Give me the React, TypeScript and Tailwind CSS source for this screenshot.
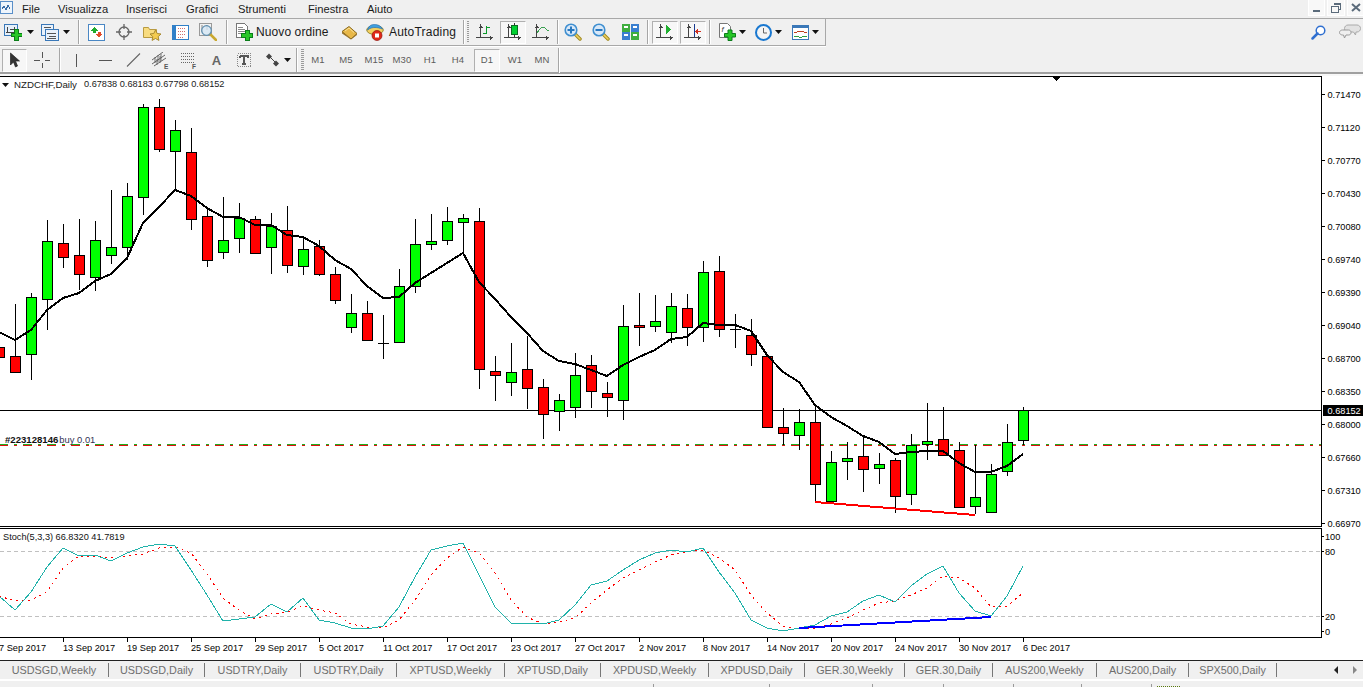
import React from "react";

type C = [number, number, number, number, "g" | "r"];
const candles: C[] = [
  [330, 347, 357, 362, "r"],
  [304, 356, 372, 373, "r"],
  [293, 297, 354, 380, "g"],
  [220, 241, 299, 330, "g"],
  [224, 243, 257, 268, "r"],
  [219, 255, 274, 290, "r"],
  [221, 240, 277, 291, "g"],
  [190, 247, 255, 264, "g"],
  [183, 196, 247, 260, "g"],
  [104, 107, 197, 215, "g"],
  [99, 107, 149, 152, "r"],
  [120, 130, 151, 191, "g"],
  [128, 152, 219, 230, "r"],
  [208, 216, 260, 267, "r"],
  [197, 240, 252, 259, "g"],
  [203, 218, 238, 253, "g"],
  [216, 219, 253, 253, "r"],
  [213, 226, 247, 274, "g"],
  [206, 230, 265, 273, "r"],
  [238, 249, 266, 275, "g"],
  [240, 246, 274, 276, "r"],
  [267, 274, 300, 304, "r"],
  [294, 313, 327, 333, "g"],
  [301, 313, 340, 340, "r"],
  [315, 343, 343, 359, "r"],
  [269, 286, 342, 343, "g"],
  [219, 244, 286, 293, "g"],
  [214, 241, 244, 250, "g"],
  [207, 221, 240, 245, "g"],
  [214, 218, 222, 253, "g"],
  [208, 221, 369, 389, "r"],
  [356, 371, 375, 401, "r"],
  [343, 372, 382, 396, "g"],
  [336, 369, 388, 409, "r"],
  [379, 387, 414, 439, "r"],
  [394, 400, 411, 431, "g"],
  [353, 375, 407, 418, "g"],
  [355, 365, 391, 408, "r"],
  [382, 393, 397, 417, "r"],
  [305, 326, 400, 420, "g"],
  [293, 325, 327, 346, "r"],
  [295, 321, 326, 332, "g"],
  [293, 306, 332, 343, "g"],
  [294, 308, 327, 346, "r"],
  [261, 272, 327, 342, "g"],
  [256, 271, 329, 337, "r"],
  [314, 329, 329, 348, "r"],
  [319, 335, 354, 366, "r"],
  [356, 356, 427, 427, "r"],
  [408, 427, 433, 445, "r"],
  [409, 422, 435, 450, "g"],
  [407, 422, 484, 502, "r"],
  [451, 462, 501, 502, "g"],
  [442, 458, 461, 480, "g"],
  [436, 456, 469, 492, "r"],
  [453, 464, 468, 484, "g"],
  [458, 460, 496, 513, "r"],
  [434, 445, 494, 505, "g"],
  [403, 441, 444, 460, "g"],
  [407, 439, 455, 455, "r"],
  [442, 450, 507, 508, "r"],
  [445, 497, 506, 514, "g"],
  [464, 474, 512, 512, "g"],
  [424, 442, 471, 476, "g"],
  [407, 410, 440, 445, "g"],
];

const ma = [332,340,330,310,298,293,281,274,258,223,207,190,196,208,217,217,225,225,235,237,246,260,269,286,298,297,283,273,263,253,282,299,317,333,351,361,364,370,376,365,357,350,339,337,323,325,325,331,355,372,382,405,417,426,436,442,454,452,451,451,463,472,472,466,454];
const maStart = -1;

const teal = [596,610,592,567,548,556,555,561,553,547,544,546,570,595,621,619,617,604,612,598,620,623,628,629,626,607,577,550,546,543,575,607,623,623,624,620,605,585,581,570,560,553,550,552,548,572,593,620,628,631,628,625,616,612,601,595,602,586,574,566,593,611,616,596,566];
const red = [596,601,600,592,568,556,556,558,556,554,548,547,553,574,598,610,619,614,612,606,610,613,624,627,628,620,600,575,558,547,553,573,600,617,624,622,618,603,590,578,570,562,555,552,550,558,570,595,613,626,629,628,624,618,610,603,601,595,588,576,578,588,607,606,593];

const px = (k: number) => maStart + 16 * k;
const toPts = (a: number[]) => a.map((y, i) => `${px(i)},${y}`).join(" ");

const prices: [string, number][] = [
  ["0.71470", 94],["0.71120", 127],["0.70770", 160],["0.70430", 193],["0.70080", 226],["0.69740", 259],["0.69390", 292],
  ["0.69040", 325],["0.68700", 358],["0.68350", 391],["0.68000", 424],["0.67660", 457],["0.67310", 490],["0.66970", 523],
];
const dates: [string, number][] = [
  ["7 Sep 2017", -1],["13 Sep 2017", 63],["19 Sep 2017", 127],["25 Sep 2017", 191],["29 Sep 2017", 255],["5 Oct 2017", 319],
  ["11 Oct 2017", 383],["17 Oct 2017", 447],["23 Oct 2017", 511],["27 Oct 2017", 575],["2 Nov 2017", 639],["8 Nov 2017", 703],
  ["14 Nov 2017", 767],["20 Nov 2017", 831],["24 Nov 2017", 895],["30 Nov 2017", 959],["6 Dec 2017", 1023],
];
const tabs: [string, string][] = [
  ["USDSGD,Weekly", "w-[109px]"],["USDSGD,Daily", "w-[96px]"],["USDTRY,Daily", "w-[96px]"],["USDTRY,Daily", "w-[96px]"],
  ["XPTUSD,Weekly", "w-[108px]"],["XPTUSD,Daily", "w-[96px]"],["XPDUSD,Weekly", "w-[108px]"],["XPDUSD,Daily", "w-[96px]"],
  ["GER.30,Weekly", "w-[100px]"],["GER.30,Daily", "w-[88px]"],["AUS200,Weekly", "w-[104px]"],["AUS200,Daily", "w-[92px]"],["SPX500,Daily", "w-[88px]"],
];

const Plus = ({ x = 7, y = 6 }: { x?: number; y?: number }) => (
  <path transform={`translate(${x} ${y})`} d="M3.5.5h4v3.5h3.5v3.500h-3.500v3.500h-4v-3.500H0V4h3.500z" fill="#27c627" stroke="#0b7d1a" />
);
const Down = () => (
  <svg width="7" height="4" viewBox="0 0 7 4"><path d="M0 0h7L3.500 4z" fill="#111" /></svg>
);
const Axes = ({ children }: { children?: React.ReactNode }) => (
  <svg width="20" height="20" viewBox="0 0 20 20" shapeRendering="crispEdges">
    <path d="M5.500 2v14M1 15.500h17M4.500 4h2M3.500 5h4M16 14.500v2M15 13.500v4" stroke="#444" fill="none" />
    {children}
  </svg>
);
const Glass = ({ plus }: { plus: boolean }) => (
  <svg width="18" height="18" viewBox="0 0 18 18">
    <path d="M10.500 10.500l5.500 5.500" stroke="#a08a20" strokeWidth="3.500" strokeLinecap="round" />
    <path d="M10.500 10.500l5.500 5.500" stroke="#f0d060" strokeWidth="1.500" strokeLinecap="round" />
    <circle cx="7" cy="7" r="5.800" fill="#d8e8f8" stroke="#3f8fd0" strokeWidth="1.600" />
    <path d={plus ? "M3.500 7h7M7 3.500v7" : "M3.500 7h7"} stroke="#2878c0" strokeWidth="2" />
  </svg>
);
const Sep = () => <div className="w-px h-[24px] bg-[#a6a6a6] border-r-0 shadow-[1px_0_0_#ffffff]" />;
const Slot = ({ c, children }: { c: string; children?: React.ReactNode }) => (
  <div className={`${c} shrink-0 h-full flex items-center justify-center`}>{children}</div>
);
const Active = ({ c, children }: { c: string; children: React.ReactNode }) => (
  <div className={`${c} shrink-0 h-[23px] flex items-center justify-center border border-[#b0b0b0] border-r-white border-b-white bg-[#f7f7f7]`}>{children}</div>
);
const Grip = () => (
  <div className="w-[3px] h-[22px] bg-[repeating-linear-gradient(to_bottom,#9a9a9a_0,#9a9a9a_1px,#f0f0f0_1px,#f0f0f0_2px)]" />
);
const Tf = ({ c, t }: { c: string; t: string }) => (
  <Slot c={c}><span className="text-[9.500px] text-[#5c5c5c] tracking-[0.200px]">{t}</span></Slot>
);

const menus: [string, string][] = [["File", "w-[36px]"],["Visualizza", "w-[68px]"],["Inserisci", "w-[60px]"],["Grafici", "w-[52px]"],["Strumenti", "w-[70px]"],["Finestra", "w-[59px]"],["Aiuto", "w-[40px]"]];

export default function App() {
  return (
    <div className="w-[1363px] h-[687px] overflow-hidden bg-[#f0f0f0] flex flex-col font-['Liberation_Sans',sans-serif] text-black">
      {/* menu */}
      <div className="h-[18px] shrink-0 flex items-center relative">
        <div className="w-[22px] h-full flex items-start">
          <svg width="14" height="15" viewBox="0 0 14 15" shapeRendering="crispEdges">
            <rect x="0.500" y="1.500" width="12" height="12" fill="#eef5fc" stroke="#5a8fc8" />
            <path d="M2 9l2-3 2 4 2-5 2 4" stroke="#3b6ea8" fill="none" />
          </svg>
        </div>
        {menus.map(([t, w]) => (
          <div key={t} className={`${w} text-[11.200px] leading-[16px] text-[#1a1a1a]`}>{t}</div>
        ))}
        <div className="ml-auto flex gap-[2px] h-[16px] self-start">
          <div className="w-[17px] h-full bg-[#f8f8f8] border-x border-b border-white flex items-end justify-center pb-[3px]"><div className="w-[7px] h-[2px] bg-[#5b6b7b]" /></div>
          <div className="w-[18px] h-full bg-[#f8f8f8] border-x border-b border-white flex items-center justify-center">
            <svg width="10" height="10" viewBox="0 0 10 10" shapeRendering="crispEdges"><path d="M3 2V.5h6.500V6H8M.5 3.500h6.500V9.500H.500z" fill="none" stroke="#5b6b7b" /><path d="M3 1h6.500M1 3.500h6" stroke="#5b6b7b" /></svg>
          </div>
          <div className="w-[16px] h-full bg-[#f8f8f8] border-l border-b border-white flex items-center justify-center">
            <svg width="10" height="9" viewBox="0 0 10 9"><path d="M1 1l8 7M9 1L1 8" stroke="#5b6b7b" strokeWidth="2" /></svg>
          </div>
        </div>
      </div>
      <div className="h-px shrink-0 bg-[#a8a8a8]" />
      {/* toolbar 1 */}
      <div className="h-[27px] shrink-0 flex items-stretch relative">
        <div className="w-[826px] h-[27px] flex items-center border-r border-b border-[#a8a8a8] pl-[2px] shadow-[0_1px_0_#ffffff]">
          <Slot c="w-[22px]">
            <svg width="18" height="18" viewBox="0 0 18 18" shapeRendering="crispEdges">
              <rect x="0.500" y="1.500" width="13" height="11" fill="#e6f0fa" stroke="#3a78b8" />
              <path d="M3 4v6M2 9h8M6 6h5M10 4v4" stroke="#444" fill="none" />
              <Plus x={7} y={6} />
            </svg>
          </Slot>
          <Slot c="w-[12px]"><Down /></Slot>
          <Slot c="w-[22px] ml-[3px]">
            <svg width="18" height="17" viewBox="0 0 18 17" shapeRendering="crispEdges">
              <rect x="0.500" y="0.500" width="12" height="11" fill="#eaf2fb" stroke="#3a78b8" />
              <rect x="4.500" y="5.500" width="13" height="11" fill="#eaf2fb" stroke="#3a78b8" />
              <path d="M3 3h7M6 9h9M8 12h7M6 14h9" stroke="#555" />
            </svg>
          </Slot>
          <Slot c="w-[11px]"><Down /></Slot>
          <Slot c="w-[12px]"><Sep /></Slot>
          <Slot c="w-[24px]">
            <svg width="17" height="17" viewBox="0 0 17 17" shapeRendering="crispEdges">
              <rect x="0.500" y="0.500" width="16" height="16" fill="#fff" stroke="#4a87c4" />
              <path d="M6 3l3.500 3.500H7.500V9h-3V6.500H2.500z" fill="#1eaa2e" />
              <path d="M11 13.500L7.500 10h2V7.500h3V10h2z" fill="#e24a2a" />
            </svg>
          </Slot>
          <Slot c="w-[32px]">
            <svg width="16" height="16" viewBox="0 0 16 16">
              <circle cx="8" cy="8" r="5" fill="none" stroke="#666" strokeWidth="1.300" />
              <path d="M8 0v5M8 11v5M0 8h5M11 8h5" stroke="#666" strokeWidth="1.300" />
            </svg>
          </Slot>
          <Slot c="w-[24px]">
            <svg width="19" height="17" viewBox="0 0 19 17">
              <path d="M.5 3.500h5l1 2h7v8H.500z" fill="#f8dc80" stroke="#b89a40" />
              <path d="M12.500 6l1.700 3.500 3.800.5-2.800 2.600.7 3.800-3.400-1.900-3.400 1.900.7-3.800L7 10l3.800-.5z" fill="#f4cc50" stroke="#a88a30" />
            </svg>
          </Slot>
          <Slot c="w-[32px]">
            <svg width="17" height="15" viewBox="0 0 17 15" shapeRendering="crispEdges">
              <rect x="0.500" y="0.500" width="16" height="14" fill="#fff" stroke="#2f7fc8" />
              <rect x="1" y="1" width="3" height="13" fill="#2f7fc8" />
              <path d="M6 3h8M6 6h8M6 9h8M6 12h5" stroke="#d07070" strokeDasharray="1 1" />
            </svg>
          </Slot>
          <Slot c="w-[24px]">
            <svg width="18" height="18" viewBox="0 0 18 18">
              <rect x="0.500" y="0.500" width="12" height="12" fill="#f2f2f2" stroke="#999" />
              <path d="M3 2v7M8 2v5" stroke="#888" />
              <path d="M11 11l6 6" stroke="#c9a830" strokeWidth="2.500" strokeLinecap="round" />
              <circle cx="7.500" cy="7.500" r="4.800" fill="#d4e6f4" fillOpacity="0.800" stroke="#5f8fb0" strokeWidth="1.200" />
            </svg>
          </Slot>
          <Slot c="w-[12px]"><Sep /></Slot>
          <Slot c="w-[24px]">
            <svg width="18" height="18" viewBox="0 0 18 18" shapeRendering="crispEdges">
              <path d="M1.500.5h8l3 3v11h-11z" fill="#fff" stroke="#777" />
              <path d="M3 4h5M3 6h7M3 8h7M3 10h4" stroke="#888" />
              <Plus x={6.500} y={6.500} />
            </svg>
          </Slot>
          <Slot c="w-[81px] !justify-start"><span className="text-[12px] text-[#1a1a1a] tracking-[0.100px]">Nuovo ordine</span></Slot>
          <Slot c="w-[24px]">
            <svg width="17" height="15" viewBox="0 0 17 15">
              <path d="M1 6.500L8 1.500l8 7-6 5.500z" fill="#e8b848" stroke="#8a6a20" />
              <path d="M1 6.500v2l9 6 6-4.500v-1.500l-6 5.500z" fill="#9a7428" />
              <path d="M4 6l4-3 5 4.500" stroke="#f8e098" fill="none" />
            </svg>
          </Slot>
          <Slot c="w-[28px]">
            <svg width="18" height="17" viewBox="0 0 18 17">
              <ellipse cx="9" cy="6" rx="8.300" ry="4.500" fill="#f4d060" stroke="#9a8a30" />
              <path d="M1.500 6C3 1 6 .5 8.500.5c3 0 6 1 8 4.500-3-1-5-1.500-7.500-1.500S4 4 1.500 6z" fill="#3f9fe0" stroke="#2870b0" strokeWidth="0.700" />
              <circle cx="11" cy="11.500" r="5" fill="#e02818" stroke="#901008" strokeWidth="0.700" />
              <rect x="9" y="9.500" width="4" height="4" fill="#fff" />
            </svg>
          </Slot>
          <Slot c="w-[70px] !justify-start"><span className="text-[12px] text-[#1a1a1a] tracking-[0.200px]">AutoTrading</span></Slot>
          <Slot c="w-[8px]"><Sep /></Slot>
          <Slot c="w-[2px]"><Grip /></Slot>
          <Slot c="w-[31px]">
            <Axes><path d="M11.500 4v8M8 11.500h3.500M11.500 5h3" stroke="#0a9a2a" strokeWidth="1" fill="none" /></Axes>
          </Slot>
          <Active c="w-[26px]">
            <Axes>
              <path d="M11.500 1v14" stroke="#333" />
              <rect x="8.500" y="3.500" width="6" height="9" fill="#00d030" stroke="#0a6a20" />
            </Axes>
          </Active>
          <Slot c="w-[30px]">
            <Axes><path d="M6 11c2-3 3.500-6 6-6s3 3 6 4" stroke="#3aa050" fill="none" /></Axes>
          </Slot>
          <Slot c="w-[3px]"><Sep /></Slot>
          <Slot c="w-[28px]"><Glass plus /></Slot>
          <Slot c="w-[28px]"><Glass plus={false} /></Slot>
          <Slot c="w-[30px]">
            <svg width="17" height="16" viewBox="0 0 17 16" shapeRendering="crispEdges">
              <rect x="0" y="0" width="8" height="7.500" fill="#3fae3f" /><rect x="8.500" y="0" width="8.500" height="7.500" fill="#3a7fd0" />
              <rect x="0" y="8" width="8" height="8" fill="#3a7fd0" /><rect x="8.500" y="8" width="8.500" height="8" fill="#3fae3f" />
              <path d="M2 3h4M11 3h4M2 11h4M11 11h4" stroke="#fff" strokeWidth="2" />
            </svg>
          </Slot>
          <Slot c="w-[4px]"><Sep /></Slot>
          <Active c="w-[26px] ml-[3px]">
            <Axes><path d="M11 5l5 4.500-5 4.500z" fill="#20b030" transform="translate(0 -2)" /></Axes>
          </Active>
          <Active c="w-[26px] ml-[2px]">
            <Axes>
              <path d="M11.500 2v13" stroke="#1a3a90" />
              <path d="M18 9h-3V7l-3 2.500 3 2.500v-2h3z" fill="#d03020" />
            </Axes>
          </Active>
          <Slot c="w-[7px]"><Sep /></Slot>
          <Slot c="w-[22px] ml-[3px]">
            <svg width="18" height="18" viewBox="0 0 18 18">
              <path d="M1.500.5h8l3 3v11h-11z" fill="#fff" stroke="#777" />
              <text x="3.500" y="9" fontSize="8" fontStyle="italic" fill="#444">f</text>
              <Plus x={6.500} y={6.500} />
            </svg>
          </Slot>
          <Slot c="w-[8px]"><Down /></Slot>
          <Slot c="w-[22px] ml-[6px]">
            <svg width="17" height="17" viewBox="0 0 17 17">
              <circle cx="8.500" cy="8.500" r="7.500" fill="#f4f4f4" stroke="#1a78d0" strokeWidth="2" />
              <path d="M8.500 4v5h3.500" stroke="#666" fill="none" />
            </svg>
          </Slot>
          <Slot c="w-[9px]"><Down /></Slot>
          <Slot c="w-[22px] ml-[6px]">
            <svg width="17" height="15" viewBox="0 0 17 15" shapeRendering="crispEdges">
              <rect x="0.500" y="0.500" width="16" height="14" fill="#fff" stroke="#3a78b8" />
              <rect x="1" y="1" width="15" height="2" fill="#3a78b8" />
              <path d="M2 7h3l2-1h3l2 1h3" stroke="#c04020" fill="none" />
              <path d="M2 11h3l2 1h3l2-1h3" stroke="#30a040" fill="none" />
            </svg>
          </Slot>
          <Slot c="w-[9px]"><Down /></Slot>
        </div>
        <div className="ml-auto flex items-center pr-[2px]">
          <svg width="15" height="15" viewBox="0 0 15 15" className="mr-[13px]">
            <circle cx="9.500" cy="5.500" r="4.300" fill="#fff" stroke="#2f6fd0" strokeWidth="1.500" />
            <path d="M6.500 8.500L1.500 13.500" stroke="#2f6fd0" strokeWidth="2.500" strokeLinecap="round" />
          </svg>
          <svg width="22" height="17" viewBox="0 0 22 17">
            <path d="M9 1h9c2 0 3.500 1.500 3.500 3.500S20 8 18 8h-1l-.5 3-2-3H9C7 8 5.500 6.500 5.500 4.500S7 1 9 1z" fill="#e2e2e2" stroke="#aaa" />
            <path d="M3.500 6h6c1.500 0 2.500 1 2.500 2.500S11 11 9.500 11H7l-1.500 3-1-3h-1C2 11 .5 10 .5 8.500S2 6 3.500 6z" fill="#efefef" stroke="#999" />
          </svg>
        </div>
      </div>
      {/* toolbar 2 */}
      <div className="h-[24px] pt-[2px] shrink-0 flex items-center pl-[2px] border-b-2 border-[#a0a0a0] box-content">
        <Active c="w-[25px]">
          <svg width="12" height="16" viewBox="0 0 12 16"><path d="M1.500 1v12l3-3 2 5 2-1-2-5h4z" fill="#333" stroke="#222" strokeWidth="0.700" /></svg>
        </Active>
        <Slot c="w-[30px]">
          <svg width="16" height="16" viewBox="0 0 16 16" shapeRendering="crispEdges"><path d="M8.500 0v6M8.500 11v5M0 8.500h6M11 8.500h5" stroke="#555" /></svg>
        </Slot>
        <Slot c="w-[4px]"><Sep /></Slot>
        <Slot c="w-[30px]"><div className="w-px h-[13px] bg-[#555]" /></Slot>
        <Slot c="w-[28px]"><div className="w-[13px] h-px bg-[#555]" /></Slot>
        <Slot c="w-[28px]"><svg width="15" height="14" viewBox="0 0 15 14"><path d="M1 13.500L14 .5" stroke="#666" strokeWidth="1.100" /></svg></Slot>
        <Slot c="w-[27px]">
          <svg width="18" height="17" viewBox="0 0 18 17">
            <path d="M0 8L11 0M0 12L13 3M2 14L14 6" stroke="#555" strokeWidth="0.900" />
            <path d="M3 5v6M6 3v7M9 2v7M5 13V7M8 11V4" stroke="#555" strokeWidth="0.800" />
            <text x="12" y="16.500" fontSize="6.500" fontWeight="700" fill="#555">E</text>
          </svg>
        </Slot>
        <Slot c="w-[29px]">
          <svg width="18" height="17" viewBox="0 0 18 17" shapeRendering="crispEdges">
            <path d="M1 1.500h13M1 4.500h13M1 7.500h13M1 10.500h13" stroke="#666" strokeDasharray="1 1" />
            <text x="12" y="16.500" fontSize="6.500" fontWeight="700" fill="#555">F</text>
          </svg>
        </Slot>
        <Slot c="w-[27px]"><span className="text-[13px] font-bold text-[#666] leading-none">A</span></Slot>
        <Slot c="w-[28px]">
          <svg width="14" height="14" viewBox="0 0 14 14" shapeRendering="crispEdges">
            <rect x="0.500" y="0.500" width="13" height="13" fill="none" stroke="#888" strokeDasharray="1 1" />
            <path d="M3 3h8v2M3 3v2M7 3v8M5 11h4" stroke="#555" strokeWidth="1.500" fill="none" />
          </svg>
        </Slot>
        <Slot c="w-[28px]">
          <svg width="15" height="14" viewBox="0 0 15 14">
            <path d="M4 .5l3 3-3 3-3-3zM11 7.500l3 3-3 3-3-3z" fill="#444" />
            <path d="M5 4l5 5" stroke="#444" />
          </svg>
        </Slot>
        <Slot c="w-[8px] -ml-[3px]"><Down /></Slot>
        <Slot c="w-[10px]"><Sep /></Slot>
        <Slot c="w-[3px]"><Grip /></Slot>
        <Tf c="w-[28px]" t="M1" />
        <Tf c="w-[28px]" t="M5" />
        <Tf c="w-[28px]" t="M15" />
        <Tf c="w-[28px]" t="M30" />
        <Tf c="w-[28px]" t="H1" />
        <Tf c="w-[28px]" t="H4" />
        <Active c="w-[26px] ml-[2px]"><span className="text-[9.500px] text-[#5c5c5c] tracking-[0.200px]">D1</span></Active>
        <Tf c="w-[30px]" t="W1" />
        <Tf c="w-[24px]" t="MN" />
        <Slot c="w-[8px]"><div className="w-px h-[25px] bg-[#a6a6a6] shadow-[1px_0_0_#ffffff]" /></Slot>
      </div>
      <div className="h-[2px] shrink-0 bg-[#f8f8f8]" />
      {/* chart + stoch */}
      <div className="bg-white shrink-0 h-[584px] flex flex-col">
        <div className="relative h-[451px] shrink-0">
          <svg width="1363" height="451" viewBox="0 76 1363 451" className="block text-[9.200px]" shapeRendering="crispEdges">
            <path d="M0 76.500H1321.500V526M0 526.500H1322" stroke="#000" fill="none" />
            <path d="M0 410.500H1321" stroke="#000" />
            <path d="M0 445.500H1321" stroke="#e01010" strokeDasharray="9 6 3 6" strokeDashoffset="1" />
            <path d="M0 444.500H1321" stroke="#1fae1f" strokeDasharray="9 6 3 6" strokeDashoffset="1" />
            {candles.map(([h, t, b, l, col], i) => {
              const c = px(i);
              return (
                <g key={i}>
                  <path d={`M${c + 0.5} ${h}V${l}`} stroke="#000" />
                  {t === b ? (
                    <path d={`M${c - 5} ${t + 0.5}H${c + 6}`} stroke="#000" />
                  ) : (
                    <rect x={c - 4.5} y={t + 0.5} width={10} height={b - t} fill={col === "g" ? "#00ff00" : "#ff0000"} stroke="#000" />
                  )}
                </g>
              );
            })}
            <polyline points={toPts(ma)} fill="none" stroke="#000" strokeWidth="2" />
            <polyline points="815,502 975,515" fill="none" stroke="#ff0000" strokeWidth="2" />
            <path d="M1051 76h10l-5 5z" fill="#000" />
            {prices.map(([t, y]) => (
              <g key={t}>
                <path d={`M1322 ${y + 0.5}h3`} stroke="#000" />
                <text x="1327.500" y={y + 3.500} fill="#000">{t}</text>
              </g>
            ))}
            <rect x="1323" y="405" width="40" height="11" fill="#000" />
            <text x="1327.500" y="414" fill="#fff">0.68152</text>
          </svg>
          <div className="absolute left-[2px] top-[3px] flex items-center h-[11px]">
            <svg width="7" height="4" viewBox="0 0 7 4"><path d="M0 0h7L3.500 4z" fill="#111" /></svg>
            <span className="ml-[5px] text-[9.700px] leading-none text-[#1a1a1a]">NZDCHF,Daily</span>
            <span className="ml-[7px] text-[9.200px] leading-none text-[#1a1a1a]">0.67838 0.68183 0.67798 0.68152</span>
          </div>
          <div className="absolute left-[5px] top-[358px] flex items-center h-[12px] leading-none">
            <span className="text-[9.600px] font-bold text-[#111]">#223128146</span>
            <span className="ml-[1px] text-[9.400px] text-[#335]">buy 0.01</span>
          </div>
        </div>
        <div className="relative h-[133px] shrink-0">
          <svg width="1363" height="133" viewBox="0 527 1363 133" className="block text-[9.200px]" shapeRendering="crispEdges">
            <path d="M0 528.500H1321.500V637.500H0" stroke="#000" fill="none" />
            <path d="M0 551.500H1321M0 616.500H1321" stroke="#c0c0c0" strokeDasharray="4 3" />
            <polyline points={toPts(red)} fill="none" stroke="#ff0000" strokeDasharray="2 4" />
            <polyline points={toPts(teal)} fill="none" stroke="#20b2aa" />
            <polyline points="799,628 991,617" fill="none" stroke="#0000ff" strokeWidth="2" />
            {([["100", 536], ["80", 551], ["20", 616], ["0", 631]] as [string, number][]).map(([t, y]) => (
              <g key={t}>
                <path d={`M1322 ${y + 0.5}h2`} stroke="#000" />
                <text x="1325" y={y + 3.500} fill="#000">{t}</text>
              </g>
            ))}
            {dates.map(([t, x]) => (
              <g key={t}>
                <path d={`M${x + 0.5} 638v4`} stroke="#000" />
                <text x={x} y="650.500" fill="#000">{t}</text>
              </g>
            ))}
          </svg>
          <div className="absolute left-[3px] top-[5px] text-[9.200px] leading-[10px] text-[#111]">Stoch(5,3,3) 66.8320 41.7819</div>
        </div>
      </div>
      {/* tabs */}
      <div className="h-px shrink-0 bg-[#222]" />
      <div className="h-[18px] shrink-0 flex items-center relative">
        {tabs.map(([t, w], i) => (
          <div key={i} className={`${w} h-[14px] shrink-0 flex items-center justify-center border-r border-[#777] text-[10.800px] leading-none text-[#6e6e6e]`}>{t}</div>
        ))}
        <div className="ml-auto flex items-center gap-[15px] pr-[6px]">
          <svg width="4" height="8" viewBox="0 0 4 8"><path d="M4 0v8L0 4z" fill="#222" /></svg>
          <svg width="4" height="8" viewBox="0 0 4 8"><path d="M0 0v8l4-4z" fill="#888" /></svg>
        </div>
      </div>
      <div className="h-[2px] shrink-0 bg-white" />
      {/* status */}
      <div className="flex-1 flex pt-[3px]">
        <div className="w-[653px] shrink-0" />
        <div className="w-[116px] shrink-0 border-l border-[#999]" />
        <div className="w-[103px] shrink-0 border-l border-[#999]" />
        <div className="w-[71px] shrink-0 border-l border-[#999]" />
        <div className="w-[70px] shrink-0 border-l border-[#999]" />
        <div className="w-[68px] shrink-0 border-l border-[#999]" />
        <div className="w-[70px] shrink-0 border-l border-[#999]" />
        <div className="w-[66px] shrink-0 border-l border-[#999] pl-[5px] pt-[2px]">
          <div className="w-[23px] h-px border-t border-dotted border-[#5a7a10]" />
        </div>
      </div>
    </div>
  );
}
